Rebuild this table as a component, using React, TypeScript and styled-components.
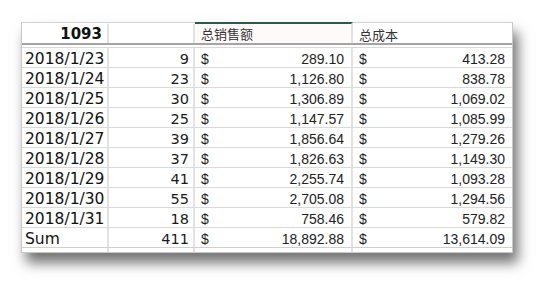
import React from 'react';
import styled, { createGlobalStyle } from 'styled-components';

const GlobalStyle = createGlobalStyle`
  html, body {
    margin: 0;
    padding: 0;
    background: #ffffff;
  }
`;

const Page = styled.div`
  width: 556px;
  height: 295px;
  padding: 22px 0 0 21px;
  box-sizing: border-box;
  background: #fff;
`;

const Sheet = styled.div`
  width: 492px;
  background: #fff;
  border: 1px solid #c8c8c8;
  border-top-color: #d4d4d4;
  box-sizing: border-box;
  box-shadow: 5px 10px 12px 0 rgba(0, 0, 0, 0.55);
`;

const COLS = '87px 86px 158px 159px';

const HeaderRow = styled.div`
  display: grid;
  grid-template-columns: ${COLS};
  height: 20px;
  border-bottom: 2px solid #a4a4a4;
  margin-bottom: 2px;
`;

const Row = styled.div`
  display: grid;
  grid-template-columns: ${COLS};
  height: 20px;
  border-top: 1px solid #dadada;
  box-sizing: border-box;
`;

const Cell = styled.div<{ $align?: 'left' | 'right'; $pad?: number; $last?: boolean }>`
  display: flex;
  align-items: center;
  justify-content: ${(p) => (p.$align === 'right' ? 'flex-end' : 'flex-start')};
  padding: 0 ${(p) => p.$pad ?? 4}px 0 3px;
  border-right: ${(p) => (p.$last ? 'none' : '2px solid #e2e2e2')};
  box-sizing: border-box;
  overflow: hidden;
  white-space: nowrap;
`;

const HeadCell = styled(Cell)<{ $accent?: boolean }>`
  border-top: ${(p) => (p.$accent ? '2px solid #2f5b4c' : '2px solid transparent')};
  margin-top: ${(p) => (p.$accent ? '-1px' : '0')};
  background: ${(p) => (p.$accent ? '#fffafa' : '#fff')};
`;

const KeyNum = styled.span`
  font-family: 'DejaVu Sans', Verdana, sans-serif;
  font-weight: bold;
  font-size: 15px;
  color: #111;
`;

const ColTitle = styled.span`
  font-family: 'Noto Sans CJK SC', 'Noto Sans', sans-serif;
  font-size: 13px;
  color: #333;
  padding-left: 3px;
`;

const DateText = styled.span`
  font-family: 'DejaVu Sans', Verdana, sans-serif;
  font-size: 15.5px;
  color: #111;
  margin-top: 2px;
`;

const Qty = styled.span`
  font-family: 'DejaVu Sans', Verdana, sans-serif;
  font-size: 14.5px;
  color: #1a1a1a;
  margin-top: 2px;
`;

const MoneyCell = styled(Cell)`
  justify-content: space-between;
  padding: 0 7px 0 6px;
`;

const Money = styled.span`
  font-family: 'Liberation Sans', Arial, sans-serif;
  font-size: 14px;
  color: #222;
  margin-top: 2px;
`;

const Filler = styled.div`
  display: grid;
  grid-template-columns: ${COLS};
  height: 4px;
  border-top: 1px solid #d0d0d0;
`;

const rows = [
  ['2018/1/23', '9', '289.10', '413.28'],
  ['2018/1/24', '23', '1,126.80', '838.78'],
  ['2018/1/25', '30', '1,306.89', '1,069.02'],
  ['2018/1/26', '25', '1,147.57', '1,085.99'],
  ['2018/1/27', '39', '1,856.64', '1,279.26'],
  ['2018/1/28', '37', '1,826.63', '1,149.30'],
  ['2018/1/29', '41', '2,255.74', '1,093.28'],
  ['2018/1/30', '55', '2,705.08', '1,294.56'],
  ['2018/1/31', '18', '758.46', '579.82'],
  ['Sum', '411', '18,892.88', '13,614.09'],
];

export default function App() {
  return (
    <Page>
      <GlobalStyle />
      <Sheet>
        <HeaderRow>
          <HeadCell $align="right" $pad={5}>
            <KeyNum>1093</KeyNum>
          </HeadCell>
          <HeadCell />
          <HeadCell $accent>
            <ColTitle>总销售额</ColTitle>
          </HeadCell>
          <HeadCell $last>
            <ColTitle>总成本</ColTitle>
          </HeadCell>
        </HeaderRow>
        {rows.map(([date, qty, sales, cost]) => (
          <Row key={date}>
            <Cell>
              <DateText>{date}</DateText>
            </Cell>
            <Cell $align="right" $pad={4}>
              <Qty>{qty}</Qty>
            </Cell>
            <MoneyCell>
              <Money>$</Money>
              <Money>{sales}</Money>
            </MoneyCell>
            <MoneyCell $last>
              <Money>$</Money>
              <Money>{cost}</Money>
            </MoneyCell>
          </Row>
        ))}
        <Filler>
          <Cell />
          <Cell />
          <Cell />
          <Cell $last />
        </Filler>
      </Sheet>
    </Page>
  );
}
